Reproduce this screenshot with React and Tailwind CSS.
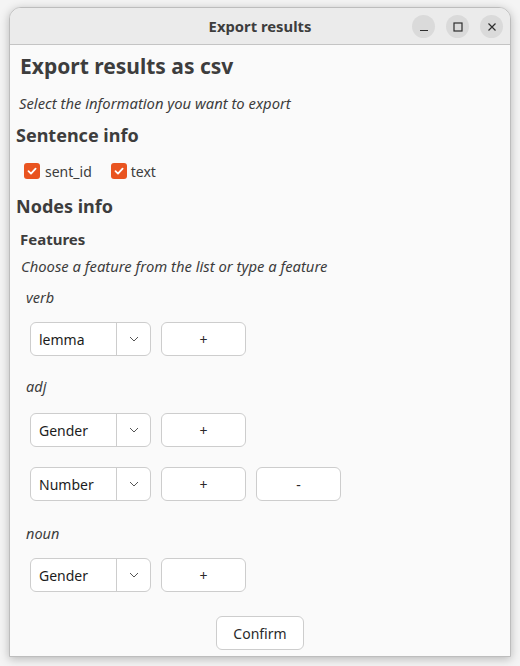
import React from "react";

const font = { fontFamily: '"Noto Sans", "DejaVu Sans", sans-serif' };

function Check() {
  return (
    <span className="w-4 h-4 rounded-[3px] bg-[#e95420] flex items-center justify-center">
      <svg width="12" height="12" viewBox="0 0 12 12" fill="none">
        <path d="M2.5 6.2 L5 8.6 L9.6 3.6" stroke="#fff" strokeWidth="1.8" strokeLinecap="round" strokeLinejoin="round" />
      </svg>
    </span>
  );
}

function Combo({ value }) {
  return (
    <div className="flex h-[34px] w-[121px] rounded-[6px] border border-[#cdcdcd] bg-white">
      <div className="w-[85px] flex items-center pl-[8px] text-[14px] text-[#1c1c1c]">{value}</div>
      <div className="flex-1 border-l border-[#cdcdcd] flex items-center justify-center">
        <svg width="10" height="6" viewBox="0 0 10 6" fill="none">
          <path d="M1 1 L5 5 L9 1" stroke="#555" strokeWidth="1" />
        </svg>
      </div>
    </div>
  );
}

function Btn({ label }) {
  return (
    <div className="h-[34px] w-[85px] rounded-[6px] border border-[#cdcdcd] bg-white flex items-center justify-center text-[14px] text-[#2a2a2a]">
      {label}
    </div>
  );
}

function Row({ value, minus, className }) {
  return (
    <div className={"flex gap-[10px] pl-[20px] " + className}>
      <Combo value={value} />
      <Btn label="+" />
      {minus && <Btn label="-" />}
    </div>
  );
}

function TitleBtn({ children }) {
  return (
    <div className="w-[23px] h-[23px] rounded-full bg-[#dadada] flex items-center justify-center">
      {children}
    </div>
  );
}

export default function App() {
  return (
    <div className="w-[520px] h-[666px] bg-[#f4f4f4] pt-[7px] pl-[9px]" style={font}>
      <div className="w-[502px] h-[650px] rounded-t-[12px] border border-[#bdbdbd] bg-[#fafafa] overflow-hidden shadow-[0_2px_10px_rgba(0,0,0,0.25)] flex flex-col">
        <div className="h-[37px] shrink-0 bg-[#ebebeb] border-b border-[#c4c4c4] relative flex items-center justify-center">
          <span className="text-[14.8px] font-bold text-[#3d3d3d]">Export results</span>
          <div className="absolute right-[7px] top-[7px] flex gap-[11px]">
            <TitleBtn>
              <svg width="10" height="10" viewBox="0 0 10 10"><path d="M1 8.5 H9" stroke="#2e2e2e" strokeWidth="1.2" /></svg>
            </TitleBtn>
            <TitleBtn>
              <svg width="10" height="10" viewBox="0 0 10 10"><rect x="1" y="1" width="8" height="8" fill="none" stroke="#2e2e2e" strokeWidth="1.2" /></svg>
            </TitleBtn>
            <TitleBtn>
              <svg width="10" height="10" viewBox="0 0 10 10"><path d="M1.5 1.5 L8.5 8.5 M8.5 1.5 L1.5 8.5" stroke="#2e2e2e" strokeWidth="1.2" /></svg>
            </TitleBtn>
          </div>
        </div>

        <div className="flex flex-col text-[#3d3d3d]">
          <h1 className="mt-[7px] h-[30px] flex items-center pl-[10px] text-[21px] font-bold">Export results as csv</h1>
          <p className="mt-[11px] h-[20px] flex items-center pl-[9px] text-[14.8px] italic">Select the information you want to export</p>
          <h2 className="mt-[10px] h-[24px] flex items-center pl-[6px] text-[18px] font-bold">Sentence info</h2>
          <div className="mt-[14px] h-[20px] flex items-center pl-[14px] text-[14px]">
            <Check />
            <span className="ml-[5px]">sent_id</span>
            <span className="ml-[19px]"><Check /></span>
            <span className="ml-[4px]">text</span>
          </div>
          <h2 className="mt-[13px] h-[24px] flex items-center pl-[6px] text-[18px] font-bold">Nodes info</h2>
          <h3 className="mt-[11px] h-[20px] flex items-center pl-[10px] text-[15px] font-bold">Features</h3>
          <p className="mt-[7px] h-[20px] flex items-center pl-[11px] text-[14.8px] italic">Choose a feature from the list or type a feature</p>

          <p className="mt-[12px] h-[20px] flex items-center pl-[16px] text-[14.5px] italic">verb</p>
          <Row value="lemma" className="mt-[14px]" />

          <p className="mt-[21px] h-[20px] flex items-center pl-[16px] text-[14.5px] italic">adj</p>
          <Row value="Gender" className="mt-[16px]" />
          <Row value="Number" minus className="mt-[20px]" />

          <p className="mt-[23px] h-[20px] flex items-center pl-[16px] text-[14.5px] italic">noun</p>
          <Row value="Gender" className="mt-[14px]" />

          <div className="mt-[24px] flex justify-center">
            <div className="h-[34px] w-[88px] rounded-[6px] border border-[#cdcdcd] bg-white flex items-center justify-center text-[14px] text-[#2a2a2a]">
              Confirm
            </div>
          </div>
        </div>
      </div>
    </div>
  );
}
